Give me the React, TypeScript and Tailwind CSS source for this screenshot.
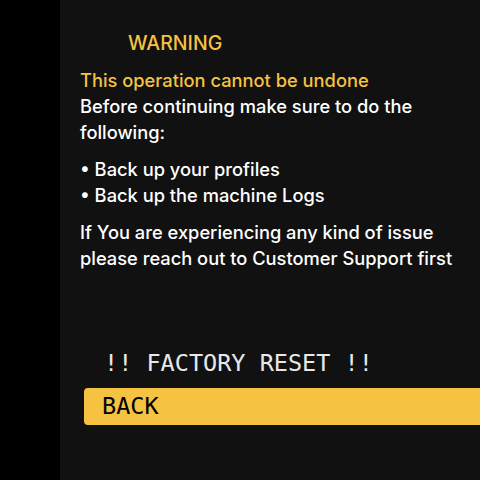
import React from "react";

const sans = { fontFamily: "Inter, 'Noto Sans', sans-serif" };
const mono = { fontFamily: "'DejaVu Sans Mono', 'Liberation Mono', monospace" };

export default function App() {
    return (
        <div className="w-[480px] h-[480px] flex bg-black overflow-hidden">
            <div className="w-[60px] shrink-0 bg-black"></div>
            <div className="flex-1 flex flex-col bg-[#111111] pl-5" style={sans}>
                <div className="pt-[31px] pl-12 text-[19.5px] leading-6 font-medium text-[#f5c242]">WARNING</div>
                <div className="mt-[12px] w-[380px] text-[18.3px] leading-[26px] font-medium text-white">
                    <p className="text-[#f5c242]">This operation cannot be undone</p>
                    <p>Before continuing make sure to do the following:</p>
                    <ul className="mt-[11px]">
                        <li>• Back up your profiles</li>
                        <li>• Back up the machine Logs</li>
                    </ul>
                    <p className="mt-[11px]">If You are experiencing any kind of issue please reach out to Customer Support first</p>
                </div>
                <div className="mt-[74px] flex flex-col" style={mono}>
                    <button className="h-[37px] pl-6 text-left text-[23.5px] text-[#e8e8e8]">!! FACTORY RESET !!</button>
                    <button className="mt-[6px] ml-1 h-[37px] pl-[18px] text-left text-[23.5px] text-black bg-[#f5c242] rounded-l">BACK</button>
                </div>
            </div>
        </div>
    );
}
